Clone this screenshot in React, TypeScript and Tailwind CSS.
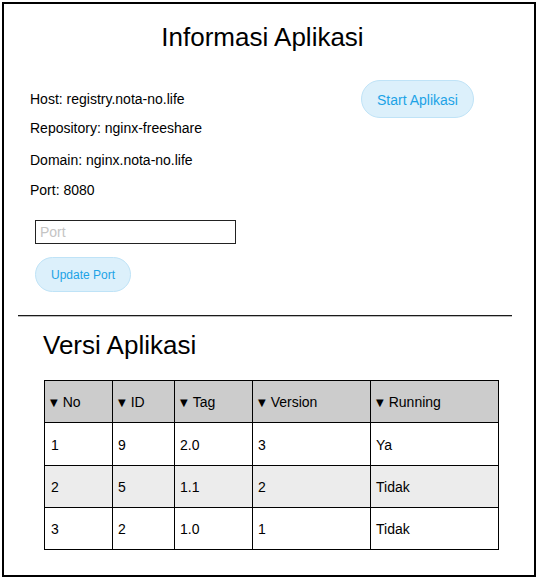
const rows = [
  { no: '1', id: '9', tag: '2.0', version: '3', running: 'Ya' },
  { no: '2', id: '5', tag: '1.1', version: '2', running: 'Tidak' },
  { no: '3', id: '2', tag: '1.0', version: '1', running: 'Tidak' },
];

const cols = [
  { label: 'No', w: 'w-[68px]' },
  { label: 'ID', w: 'w-[62px]' },
  { label: 'Tag', w: 'w-[78px]' },
  { label: 'Version', w: 'w-[118px]' },
  { label: 'Running', w: 'w-[128px]' },
];

export default function App() {
  return (
    <div className="ml-[2px] mt-[2px] w-[534px] h-[575px] border-2 border-black bg-white text-black text-[14px] font-['Liberation_Sans',Arial,sans-serif]">
      {/* header */}
      <h1 className="mt-[18px] pr-[13px] text-[26px] leading-[30px] text-center">Informasi Aplikasi</h1>

      {/* info + start */}
      <div className="flex mt-[28px]">
        <div className="ml-[26px] pt-[9px] flex flex-col leading-[20px]">
          <div>Host: registry.nota-no.life</div>
          <div className="mt-[9px]">Repository: nginx-freeshare</div>
          <div className="mt-[12px]">Domain: nginx.nota-no.life</div>
          <div className="mt-[10px]">Port: 8080</div>
        </div>
        <button className="ml-auto mr-[60px] w-[113px] h-[38px] rounded-full bg-[#dcf0fb] border border-[#bfe3f7] text-[#1ca3e6] text-[14px] leading-[20px] pt-[2px]">
          Start Aplikasi
        </button>
      </div>

      <input
        placeholder="Port"
        className="block mt-[20px] ml-[31px] w-[201px] h-[24px] border border-[#222] px-[4px] text-[14px] placeholder:text-[#c4c4c4] outline-none"
      />
      <button className="block mt-[13px] ml-[31px] w-[96px] h-[35px] rounded-full bg-[#dcf0fb] border border-[#bfe3f7] text-[#1ca3e6] text-[12px]">
        Update Port
      </button>

      <div className="mt-[23px] ml-[14px] w-[494px] h-[2px] bg-[#1a1a1a] border-b border-[#bbb]" />

      <h2 className="mt-[13px] ml-[39px] text-[26px] leading-[30px]">Versi Aplikasi</h2>

      <table className="mt-[20px] ml-[40px] border-collapse text-[14px]">
        <thead>
          <tr className="h-[42px] bg-[#cccccc]">
            {cols.map((c) => (
              <th key={c.label} className={`${c.w} border border-black text-left font-normal pl-[5px] pt-[2px]`}>
                <span className="text-[10px] mr-[5px] align-[1px] font-['DejaVu_Sans',sans-serif]">▼</span>
                {c.label}
              </th>
            ))}
          </tr>
        </thead>
        <tbody>
          {rows.map((r, i) => (
            <tr key={r.no} className={`${i === 0 ? 'h-[43px]' : 'h-[42px]'} ${i === 1 ? 'bg-[#ececec]' : 'bg-white'}`}>
              <td className="border border-black pl-[6px] pt-[2px]">{r.no}</td>
              <td className="border border-black pl-[5px] pt-[2px]">{r.id}</td>
              <td className="border border-black pl-[5px] pt-[2px]">{r.tag}</td>
              <td className="border border-black pl-[5px] pt-[2px]">{r.version}</td>
              <td className="border border-black pl-[5px] pt-[2px]">{r.running}</td>
            </tr>
          ))}
        </tbody>
      </table>
    </div>
  );
}
